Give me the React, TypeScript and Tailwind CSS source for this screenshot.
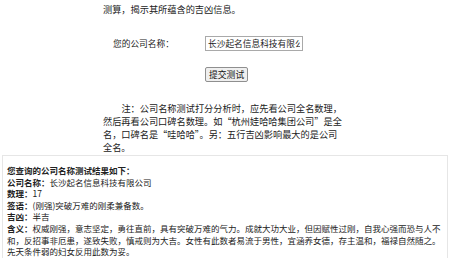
import React from 'react';

const font = { fontFamily: '"Noto Sans CJK SC", "Noto Sans", sans-serif' };

const rows: { k: string; v: string }[] = [
    { k: '公司名称：', v: '长沙起名信息科技有限公司' },
    { k: '数理：', v: '17' },
    { k: '签语：', v: '(刚强)突破万难的刚柔兼备数。' },
    { k: '吉凶：', v: '半吉' },
];

const App: React.FC = () => {
    return (
        <div className="w-[450px] h-[271px] overflow-hidden bg-white text-[#222]" style={font}>
            <div className="ml-[103px] pt-[1px] text-[9.2px] leading-[16px]">测算，揭示其所蕴含的吉凶信息。</div>

            {/* form */}
            <div className="mt-[19px] flex items-center h-[15px]">
                <span className="ml-[113px] w-[92px] text-[8.7px]">您的公司名称：</span>
                <input
                    readOnly
                    value="长沙起名信息科技有限公司"
                    className="w-[98px] h-[15px] px-[2px] border border-[#a9a9a9] text-[8.7px] leading-[13px] text-[#222] outline-none"
                    style={font}
                />
            </div>
            <div className="mt-[16px] ml-[205px] flex">
                <button className="h-[15px] px-[3px] bg-[#efefef] border border-[#8f8f8f] rounded-[2px] text-[8.8px] leading-[13px] text-[#111]" style={font}>
                    提交测试
                </button>
            </div>

            {/* note */}
            <div className="mt-[20px] ml-[103px] w-[260px] text-[9.2px] leading-[13px] whitespace-nowrap">
                <span className="pl-[18.4px]">注：公司名称测试打分分析时，应先看公司全名数理，</span><br />
                然后再看公司口碑名数理。如“杭州娃哈哈集团公司”是全<br />
                名，口碑名是“哇哈哈”。另：五行吉凶影响最大的是公司<br />
                全名。
            </div>

            {/* result */}
            <div className="mx-[2px] mt-[1px] h-[103px] border border-[#e6e6e6] border-b-0 px-[4px] pt-[9px] text-[8.5px] leading-[11.6px]">
                <div className="font-bold">您查询的公司名称测试结果如下：</div>
                {rows.map((r, i) => (
                    <div key={i}>
                        <b>{r.k}</b>{r.v}
                    </div>
                ))}
                <div>
                    <b>含义：</b>权威刚强，意志坚定，勇往直前，具有突破万难的气力。成就大功大业，但因赋性过刚，自我心强而恐与人不和，反招事非厄患，遂致失败，慎戒则为大吉。女性有此数者易流于男性，宜涵养女德，存主温和，福禄自然随之。先天条件弱的妇女反用此数为妥。
                </div>
            </div>
        </div>
    );
};

export default App;
